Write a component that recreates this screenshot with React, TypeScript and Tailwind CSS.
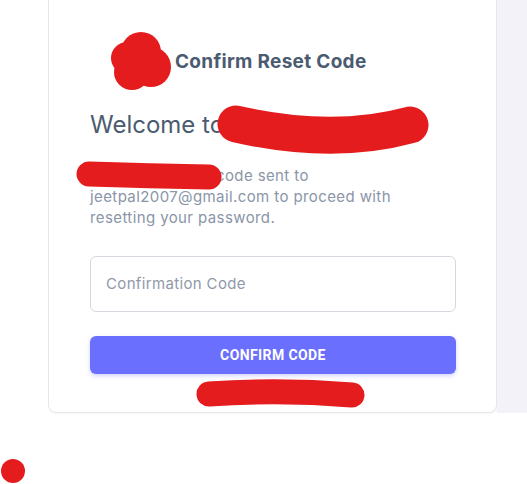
import React from "react";

// redaction marks drawn over the screenshot
function Scribbles() {
  const red = "#e41c1e";
  return (
    <svg
      className="absolute inset-0 pointer-events-none"
      width="527"
      height="484"
      viewBox="0 0 527 484"
    >
      <g fill={red}>
        <circle cx="141" cy="52" r="20" />
        <circle cx="151" cy="67" r="20" />
        <circle cx="132" cy="72" r="18" />
        <circle cx="127" cy="58" r="16" />
        <circle cx="13" cy="471" r="12" />
      </g>
      <g fill="none" stroke={red} strokeLinecap="round">
        <path d="M236 124 Q333 146 410 125" strokeWidth="37" />
        <path d="M89 174 Q150 176 209 177" strokeWidth="25" />
        <path d="M209 394 Q280 389 352 395" strokeWidth="25" />
      </g>
    </svg>
  );
}

export default function App() {
  return (
    <div className="relative w-full h-[484px] bg-white font-['Inter',sans-serif] overflow-hidden">
      <div className="flex h-[413px]">
        <div className="w-[48px] bg-white" />
        <div className="w-[449px] bg-white border-x border-b border-[#e6e6ec] rounded-b-lg shadow-[1px_1px_3px_rgba(0,0,0,0.04)] pl-[41px] pr-[40px] pt-[41px]">
          {/* brand row */}
          <div className="flex items-center h-[40px] pl-[30px] gap-[11px]">
            <div className="w-[44px] h-[40px]" />
            <span className="mt-[2px] text-[19px] font-bold text-[#4b5b70] tracking-[0.3px]">
              Confirm Reset Code
            </span>
          </div>

          <h1 className="mt-[28px] text-[24px] leading-[32px] text-[#4b5b70]">
            Welcome to
          </h1>

          <p className="mt-[24px] text-[15px] leading-[21px] text-[#8a95a7] tracking-[0.4px]">
            Please enter the code sent to
            <br />
            jeetpal2007@gmail.com to proceed with
            <br />
            resetting your password.
          </p>

          <div className="mt-[28px] h-[56px] rounded-md border border-[#d5d9df] flex items-center px-[15px]">
            <span className="text-[15px] text-[#8f99a8] tracking-[0.35px]">Confirmation Code</span>
          </div>

          <button className="mt-[24px] w-full h-[38px] rounded-md bg-[#6b6ffe] shadow-[0_2px_4px_rgba(107,111,254,0.3)] text-white text-[14px] font-bold font-['Roboto',sans-serif] tracking-[0.4px]">
            CONFIRM CODE
          </button>

          <div className="mt-[8px] text-center text-[14px] leading-[24px] text-[#6b6ffe]">
            Back to Login
          </div>
        </div>
        <div className="flex-1 bg-[#f3f2f8]" />
      </div>
      <Scribbles />
    </div>
  );
}
